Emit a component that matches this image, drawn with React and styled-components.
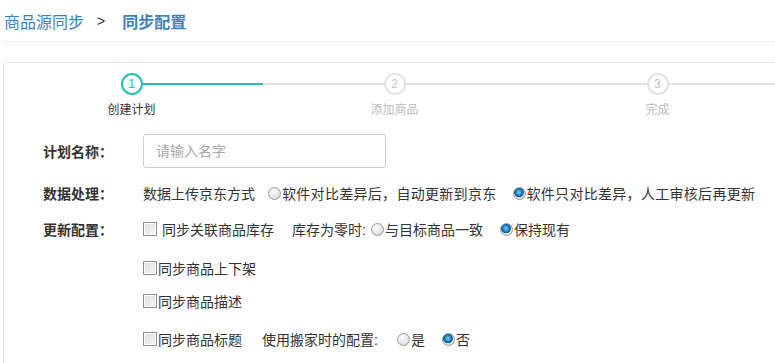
import styled, { createGlobalStyle } from "styled-components";

const GlobalStyle = createGlobalStyle`
  body {
    margin: 0;
    background: #fff;
    overflow: hidden;
    font-family: "Liberation Sans", "Noto Sans CJK SC", sans-serif;
    color: #333;
  }
`;

const Page = styled.div`
  padding: 0 0 0 3px;
  width: 772px;
`;

const Breadcrumb = styled.div`
  display: flex;
  align-items: center;
  height: 42px;
  padding: 0 0 0 1px;
  border-bottom: 1px solid #ececec;
  font-size: 16px;
  color: #3d7fc4;
  box-sizing: border-box;
`;
const Crumb = styled.span`
  font-weight: ${(p) => (p.current ? 700 : 400)};
`;
const Sep = styled.span`
  color: #333;
  font-size: 14px;
  margin: 0 17px 0 13px;
`;

const Panel = styled.div`
  margin-top: 20px;
  margin-right: -30px;
  border: 1px solid #e6e6e6;
  border-right: none;
  border-bottom: none;
  padding: 10px 0 20px 0;
`;

const Steps = styled.div`
  display: grid;
  grid-template-columns: repeat(3, 263px);
  margin-left: -4px;
`;
const Step = styled.div`
  display: flex;
  flex-direction: column;
  align-items: center;
`;
const Track = styled.div`
  position: relative;
  width: 100%;
  height: 22px;
  display: flex;
  justify-content: center;
  &::before,
  &::after {
    content: "";
    position: absolute;
    top: 10px;
    height: 2px;
    width: 50%;
  }
  &::before {
    left: 0;
    background: ${(p) => p.left || "transparent"};
  }
  &::after {
    right: 0;
    background: ${(p) => p.right || "transparent"};
  }
`;
const Circle = styled.div`
  position: relative;
  z-index: 1;
  width: 22px;
  height: 22px;
  box-sizing: border-box;
  border-radius: 50%;
  background: #fff;
  border: 2px solid ${(p) => (p.active ? "#22c1b3" : "#e3e3e3")};
  color: ${(p) => (p.active ? "#22c1b3" : "#c2c2c2")};
  font-size: 12px;
  display: flex;
  align-items: center;
  justify-content: center;
`;
const StepLabel = styled.div`
  margin-top: 5px;
  font-size: 12px;
  color: ${(p) => (p.active ? "#333" : "#bbb")};
`;

const Form = styled.div`
  padding: 17px 0 0 39px;
`;
const Row = styled.div`
  display: flex;
  align-items: center;
  min-height: 20px;
  margin-top: ${(p) => p.gap || 0}px;
  font-size: 14px;
`;
const Label = styled.div`
  width: 100px;
  flex: none;
  font-weight: 700;
  color: #333;
`;
const Input = styled.input`
  width: 243px;
  height: 34px;
  box-sizing: border-box;
  border: 1px solid #cfcfcf;
  border-radius: 3px;
  padding: 0 12px;
  font-size: 14px;
  font-family: inherit;
  outline: none;
  &::placeholder {
    color: #a9a9a9;
  }
`;
const Text = styled.span`
  margin-right: ${(p) => p.mr || 0}px;
  margin-left: ${(p) => p.ml || 0}px;
  letter-spacing: ${(p) => p.ls || 0}px;
  white-space: nowrap;
`;
const Radio = styled.span`
  display: inline-block;
  flex: none;
  width: 13px;
  height: 13px;
  box-sizing: border-box;
  border-radius: 50%;
  border: 1px solid #9a9a9a;
  margin: 0 1px 0 ${(p) => p.ml || 0}px;
  background: ${(p) =>
    p.checked
      ? "radial-gradient(circle at 45% 40%, #7fd0ff 0, #1d7fc4 35%, #0c4f8a 50%, #e8e8e8 58%, #c8c8c8 100%)"
      : "radial-gradient(circle at 40% 35%, #fff 0, #e6e6e6 55%, #c4c4c4 100%)"};
`;
const Check = styled.span`
  display: inline-block;
  flex: none;
  width: 14px;
  height: 14px;
  box-sizing: border-box;
  border: 1px solid #8f8f8f;
  background: linear-gradient(135deg, #dcdcdc, #f6f6f6);
  box-shadow: inset 0 0 0 1px #fff;
  margin-right: ${(p) => p.mr || 1}px;
`;

const steps = [
  { n: 1, label: "创建计划", active: true, left: null, right: "#22c1b3" },
  { n: 2, label: "添加商品", left: "#e3e3e3", right: "#e3e3e3" },
  { n: 3, label: "完成", left: "#e3e3e3", right: "#e3e3e3" },
];

export default function App() {
  return (
    <Page>
      <GlobalStyle />
      <Breadcrumb>
        <Crumb>商品源同步</Crumb>
        <Sep>&gt;</Sep>
        <Crumb current>同步配置</Crumb>
      </Breadcrumb>
      <Panel>
        <Steps>
          {steps.map((s) => (
            <Step key={s.n}>
              <Track left={s.left} right={s.right}>
                <Circle active={s.active}>{s.n}</Circle>
              </Track>
              <StepLabel active={s.active}>{s.label}</StepLabel>
            </Step>
          ))}
        </Steps>
        <Form>
          <Row>
            <Label>计划名称：</Label>
            <Input placeholder="请输入名字" />
          </Row>
          <Row gap={15}>
            <Label>数据处理：</Label>
            <Text mr={13}>数据上传京东方式</Text>
            <Radio />
            <Text mr={16} ls={0.3}>软件对比差异后，自动更新到京东</Text>
            <Radio checked />
            <Text ls={0.3}>软件只对比差异，人工审核后再更新</Text>
          </Row>
          <Row gap={16}>
            <Label>更新配置：</Label>
            <Check mr={5} />
            <Text mr={18}>同步关联商品库存</Text>
            <Text>库存为零时:</Text>
            <Radio ml={5} />
            <Text mr={17}>与目标商品一致</Text>
            <Radio checked />
            <Text>保持现有</Text>
          </Row>
          <Row gap={19}>
            <Label />
            <Check />
            <Text>同步商品上下架</Text>
          </Row>
          <Row gap={13}>
            <Label />
            <Check />
            <Text>同步商品描述</Text>
          </Row>
          <Row gap={18}>
            <Label />
            <Check />
            <Text mr={20}>同步商品标题</Text>
            <Text mr={19}>使用搬家时的配置:</Text>
            <Radio />
            <Text mr={17}>是</Text>
            <Radio checked />
            <Text>否</Text>
          </Row>
        </Form>
      </Panel>
    </Page>
  );
}
